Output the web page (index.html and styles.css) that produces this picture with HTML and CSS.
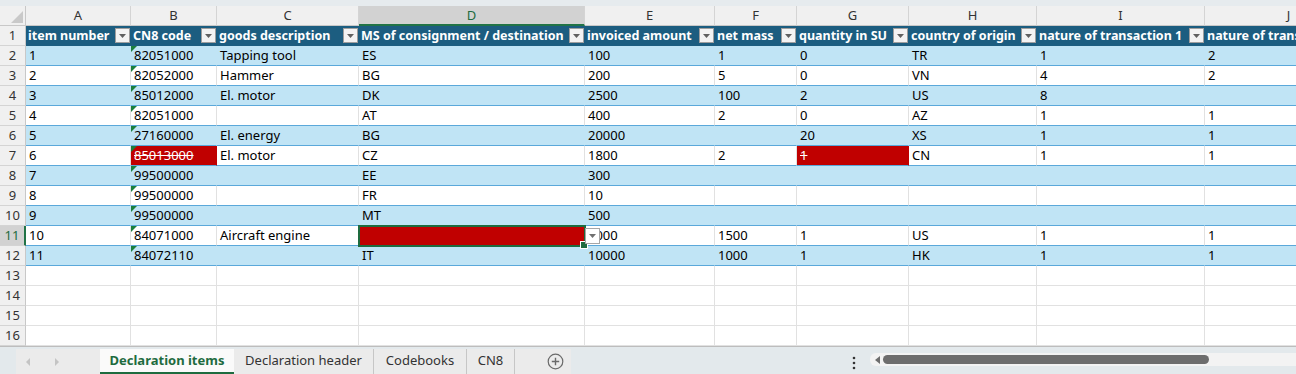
FILE: index.html
```html
<!DOCTYPE html>
<html lang="en">
<head>
  <meta charset="UTF-8">
  <meta name="viewport" content="width=device-width, initial-scale=1.0">
  <title>Declaration items</title>
  <link rel="stylesheet" href="styles.css">
</head>
<body>
  <div class="topstrip"></div>
  <div id="sheet" class="sheet"></div>

  <div class="tabbar">
    <div class="tabstrip">
      <div class="nav">
        <svg width="8" height="10" viewBox="0 0 8 10"><polygon points="6,1 2,5 6,9" fill="#c4c4c4"/></svg>
        <svg width="8" height="10" viewBox="0 0 8 10"><polygon points="2,1 6,5 2,9" fill="#c4c4c4"/></svg>
      </div>
      <div class="tab current">Declaration items</div>
      <div class="tab">Declaration header</div>
      <div class="tab">Codebooks</div>
      <div class="tab">CN8</div>
      <div class="add">
        <svg width="17" height="17" viewBox="0 0 17 17">
          <circle cx="8.5" cy="8.5" r="7.3" fill="none" stroke="#6a6a6a" stroke-width="1.2"/>
          <path d="M8.5 4.8v7.4M4.8 8.5h7.4" stroke="#6a6a6a" stroke-width="1.4"/>
        </svg>
      </div>
    </div>
    <div class="more">
      <svg width="6" height="14" viewBox="0 0 6 14">
        <circle cx="3" cy="2" r="1.3" fill="#333"/>
        <circle cx="3" cy="7" r="1.3" fill="#333"/>
        <circle cx="3" cy="12" r="1.3" fill="#333"/>
      </svg>
    </div>
    <div class="hscroll">
      <svg class="arrow" width="6" height="8" viewBox="0 0 6 8"><polygon points="5,0 0,4 5,8" fill="#6d6d6d"/></svg>
      <div class="thumb"></div>
    </div>
  </div>

  <script>
    const letters = ["A", "B", "C", "D", "E", "F", "G", "H", "I", "J"];
    const headers = ["item number", "CN8 code", "goods description", "MS of consignment / destination",
      "invoiced amount", "net mass", "quantity in SU", "country of origin",
      "nature of transaction 1", "nature of transaction 2"];
    const rows = [
      ["1", "82051000", "Tapping tool", "ES", "100", "1", "0", "TR", "1", "2"],
      ["2", "82052000", "Hammer", "BG", "200", "5", "0", "VN", "4", "2"],
      ["3", "85012000", "El. motor", "DK", "2500", "100", "2", "US", "8", ""],
      ["4", "82051000", "", "AT", "400", "2", "0", "AZ", "1", "1"],
      ["5", "27160000", "El. energy", "BG", "20000", "", "20", "XS", "1", "1"],
      ["6", "85013000", "El. motor", "CZ", "1800", "2", "1", "CN", "1", "1"],
      ["7", "99500000", "", "EE", "300", "", "", "", "", ""],
      ["8", "99500000", "", "FR", "10", "", "", "", "", ""],
      ["9", "99500000", "", "MT", "500", "", "", "", "", ""],
      ["10", "84071000", "Aircraft engine", "", "1000", "1500", "1", "US", "1", "1"],
      ["11", "84072110", "", "IT", "10000", "1000", "1", "HK", "1", "1"]
    ];
    // cells flagged red by validation: "row:column index"
    const errors = ["7:1", "7:6", "11:3"];
    const activeRow = 11, activeCol = 3;

    const sheet = document.getElementById("sheet");

    function cell(cls, text) {
      const div = document.createElement("div");
      div.className = "cell " + cls;
      if (text) div.textContent = text;
      sheet.appendChild(div);
      return div;
    }

    // column letters
    const corner = cell("corner", "");
    corner.innerHTML = '<svg width="12" height="12" viewBox="0 0 12 12"><polygon points="12,0 12,12 0,12" fill="#c9c9c9"/></svg>';
    letters.forEach((l, i) => cell("colhead" + (i === activeCol ? " sel" : ""), l));

    // table header row
    cell("rowhead", "1");
    headers.forEach(h => {
      const c = cell("thead", "");
      const span = document.createElement("span");
      span.textContent = h;
      c.appendChild(span);
      const btn = document.createElement("span");
      btn.className = "filter";
      btn.innerHTML = '<svg width="7" height="4" viewBox="0 0 7 4"><polygon points="0,0 7,0 3.5,4" fill="#606060"/></svg>';
      c.appendChild(btn);
    });

    // data rows
    rows.forEach((r, idx) => {
      const rowNum = idx + 2;
      const band = rowNum % 2 === 0 ? "band" : "plain";
      cell("rowhead" + (rowNum === activeRow ? " sel" : ""), String(rowNum));
      r.forEach((v, col) => {
        let cls = "tcell " + band;
        if (col === 1) cls += " flag";
        if (errors.includes(rowNum + ":" + col)) cls += " bad";
        const c = cell(cls, v);
        if (rowNum === activeRow && col === activeCol) {
          c.classList.add("active-cell");
          c.innerHTML = '<span class="handle"></span><span class="dropdown"><svg width="7" height="4" viewBox="0 0 7 4"><polygon points="0,0 7,0 3.5,4" fill="#707070"/></svg></span>';
        }
      });
    });

    // empty rows below the table
    for (let n = 13; n <= 16; n++) {
      cell("rowhead", String(n));
      letters.forEach(() => cell("empty", ""));
    }
  </script>
</body>
</html>
```

FILE: styles.css
```css
body {
  margin: 0;
  width: 1296px;
  height: 374px;
  overflow: hidden;
  background: #fff;
  font-family: "Noto Sans", "Liberation Sans", sans-serif;
  color: #000;
}

.topstrip {
  height: 6px;
  background: #e6ebee;
}

.sheet {
  display: grid;
  grid-template-columns: 26px 105px 86px 142px 226px 130px 82px 112px 128px 168px 168px;
  grid-auto-rows: 20px;
  width: 1296px;
  height: 340px;
  overflow: hidden;
  border-bottom: 1px solid #bdbdbd;
}

.cell {
  box-sizing: border-box;
  position: relative;
  padding: 0 3px;
  font-size: 13px;
  line-height: 19px;
  white-space: nowrap;
  overflow: hidden;
  border-right: 1px solid #e1e1e1;
  border-bottom: 1px solid #e1e1e1;
}

.corner {
  background: #f0f0f0;
  border-right: 1px solid #c8c8c8;
  border-bottom: 1px solid #c8c8c8;
  display: flex;
  align-items: flex-end;
  justify-content: flex-end;
  padding: 0 2px 2px 0;
}

.colhead {
  background: #f0f0f0;
  color: #333;
  text-align: center;
  border-right: 1px solid #d4d4d4;
  border-bottom: 1px solid #c8c8c8;
}

.colhead.sel {
  background: #d2d2d2;
  color: #1e6b3f;
  border-bottom: 2px solid #217346;
}

.rowhead {
  background: #f0f0f0;
  color: #333;
  text-align: center;
  padding: 0;
  border-right: 1px solid #c8c8c8;
  border-bottom: 1px solid #d4d4d4;
}

.rowhead.sel {
  background: #d2d2d2;
  color: #1e6b3f;
  border-right: 2px solid #217346;
}

/* table */
.thead {
  background: #1c5d80;
  color: #fff;
  font-weight: bold;
  font-size: 12.5px;
  padding: 0 1px 0 2px;
  border-right: none;
  border-bottom: 1px solid #1c5d80;
  display: flex;
  align-items: center;
  justify-content: space-between;
}

.filter {
  flex: none;
  width: 15px;
  height: 15px;
  box-sizing: border-box;
  margin-left: 4px;
  background: #f3f3f3;
  border: 1px solid #9e9e9e;
  display: flex;
  align-items: center;
  justify-content: center;
}

.tcell {
  border-bottom: 1px solid #5aa8da;
}

.band {
  background: #c0e4f5;
  border-right-color: #c0e4f5;
}

.plain {
  background: #fff;
}

.flag::before {
  content: "";
  position: absolute;
  left: 0;
  top: 0;
  border-top: 6px solid #1a7f3c;
  border-right: 6px solid transparent;
}

.bad {
  background: #c00000;
  border-right-color: #c00000;
  color: #fff;
  text-decoration: line-through;
}

.active-cell {
  overflow: visible;
  z-index: 2;
  outline: 2px solid #1e6b3f;
  outline-offset: -1px;
}

.handle {
  position: absolute;
  right: -4px;
  bottom: -4px;
  width: 6px;
  height: 6px;
  background: #1e6b3f;
  border: 1px solid #fff;
}

.dropdown {
  position: absolute;
  left: calc(100% + 1px);
  top: 2px;
  width: 15px;
  height: 16px;
  box-sizing: border-box;
  background: #fff;
  border: 1px solid #a6a6a6;
  display: flex;
  align-items: center;
  justify-content: center;
}

/* sheet tabs */
.tabbar {
  height: 27px;
  background: #e3e9ec;
  display: flex;
  align-items: flex-start;
  padding-left: 16px;
}

.tabstrip {
  display: flex;
  width: 555px;
  height: 25px;
  margin-top: 2px;
  background: #ebebeb;
  font-size: 13px;
  color: #333;
}

.nav {
  width: 84px;
  display: flex;
  align-items: center;
  gap: 21px;
  padding-left: 8px;
  box-sizing: border-box;
}

.tab {
  box-sizing: border-box;
  height: 25px;
  line-height: 23px;
  text-align: center;
  border-right: 1px solid #c6c6c6;
}

.tab:nth-child(2) { width: 134px; }
.tab:nth-child(3) { width: 140px; }
.tab:nth-child(4) { width: 93px; }
.tab:nth-child(5) { width: 48px; }

.tab.current {
  background: #fafafa;
  color: #1e6b3f;
  font-weight: bold;
  border-right: none;
  border-bottom: 2px solid #1e6b3f;
}

.add {
  margin-left: 32px;
  display: flex;
  align-items: center;
}

.more {
  margin-left: 280px;
  padding-top: 6px;
}

.hscroll {
  margin-left: 13px;
  margin-top: 6px;
  flex: 1;
  height: 13px;
  background: #f3f3f3;
  border-radius: 6px 0 0 6px;
  display: flex;
  align-items: center;
  padding-left: 5px;
}

.thumb {
  width: 326px;
  height: 9px;
  margin-left: 2px;
  background: #6d6d6d;
  border-radius: 5px;
}
```
